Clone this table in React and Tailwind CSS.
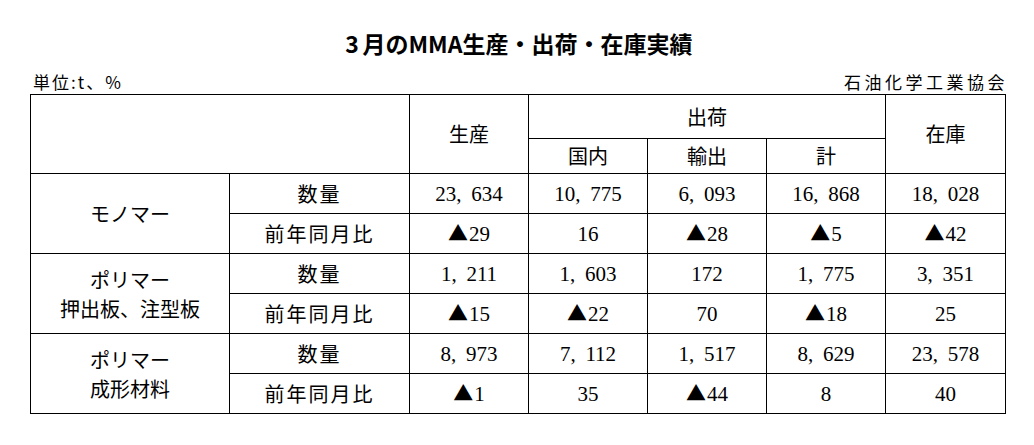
import React from 'react';

const jp = '"Noto Sans CJK JP", "Noto Sans", sans-serif';
const num = '"Liberation Serif", "DejaVu Serif", "Noto Sans CJK JP", serif';

const groups = [
  {
    label: ['モノマー'],
    qty: ['23,634', '10,775', '6,093', '16,868', '18,028'],
    yoy: ['▲29', '16', '▲28', '▲5', '▲42'],
  },
  {
    label: ['ポリマー', '押出板、注型板'],
    qty: ['1,211', '1,603', '172', '1,775', '3,351'],
    yoy: ['▲15', '▲22', '70', '▲18', '25'],
  },
  {
    label: ['ポリマー', '成形材料'],
    qty: ['8,973', '7,112', '1,517', '8,629', '23,578'],
    yoy: ['▲1', '35', '▲44', '8', '40'],
  },
];

// comma gets a wide slot like the half-width mincho digits in the source
function Num({ value }) {
  const down = value.startsWith('▲');
  const parts = (down ? value.slice(1) : value).split(',');
  return (
    <span style={{ fontFamily: num }}>
      {down && (
        <span className="text-[20px] mr-[1px]" style={{ fontFamily: jp }}>▲</span>
      )}
      {parts.map((p, i) => (
        <React.Fragment key={i}>
          {i > 0 && <span className="inline-block w-[15px] text-left">,</span>}
          {p}
        </React.Fragment>
      ))}
    </span>
  );
}

const cell = 'border border-black p-0 text-center align-middle font-normal';

export default function App() {
  return (
    <div className="w-[1034px] h-[445px] bg-white px-[30px] text-black" style={{ fontFamily: jp }}>
      <div className="pt-[31px] text-center text-[23px] leading-[25px] font-bold">
        <span className="inline-block w-[21px]">3</span>月のMMA生産・出荷・在庫実績
      </div>
      <div className="flex justify-between items-end h-[38px] pb-[2px] px-[3px] text-[17px] leading-[20px]">
        <span className="tracking-[2px]">単位:t、%</span>
        <span className="tracking-[3.5px] -mr-[7px]">石油化学工業協会</span>
      </div>
      <table className="table-fixed border-collapse w-[975px]">
        <colgroup>
          <col className="w-[199px]" />
          <col className="w-[180px]" />
          <col className="w-[119px]" />
          <col className="w-[119px]" />
          <col className="w-[119px]" />
          <col className="w-[119px]" />
          <col className="w-[120px]" />
        </colgroup>
        <thead className="text-[20px]">
          <tr className="h-[44px]">
            <th className={cell} colSpan={2} rowSpan={2}></th>
            <th className={cell} rowSpan={2}>生産</th>
            <th className={cell} colSpan={3}>出荷</th>
            <th className={cell} rowSpan={2}>在庫</th>
          </tr>
          <tr className="h-[35px]">
            <th className={cell}>国内</th>
            <th className={cell}>輸出</th>
            <th className={cell}>計</th>
          </tr>
        </thead>
        <tbody className="text-[20px]">
          {groups.map((g, gi) => (
            <React.Fragment key={gi}>
              <tr className="h-[40px]">
                <td className={cell + ' leading-[29px]'} rowSpan={2}>
                  {g.label.map((l, li) => (
                    <div key={li}>{l}</div>
                  ))}
                </td>
                <td className={cell + ' tracking-[2px]'}>数量</td>
                {g.qty.map((v, i) => (
                  <td key={i} className={cell + ' text-[21px]'}>
                    <Num value={v} />
                  </td>
                ))}
              </tr>
              <tr className="h-[40px]">
                <td className={cell + ' tracking-[2px]'}>前年同月比</td>
                {g.yoy.map((v, i) => (
                  <td key={i} className={cell + ' text-[21px]'}>
                    <Num value={v} />
                  </td>
                ))}
              </tr>
            </React.Fragment>
          ))}
        </tbody>
      </table>
    </div>
  );
}
